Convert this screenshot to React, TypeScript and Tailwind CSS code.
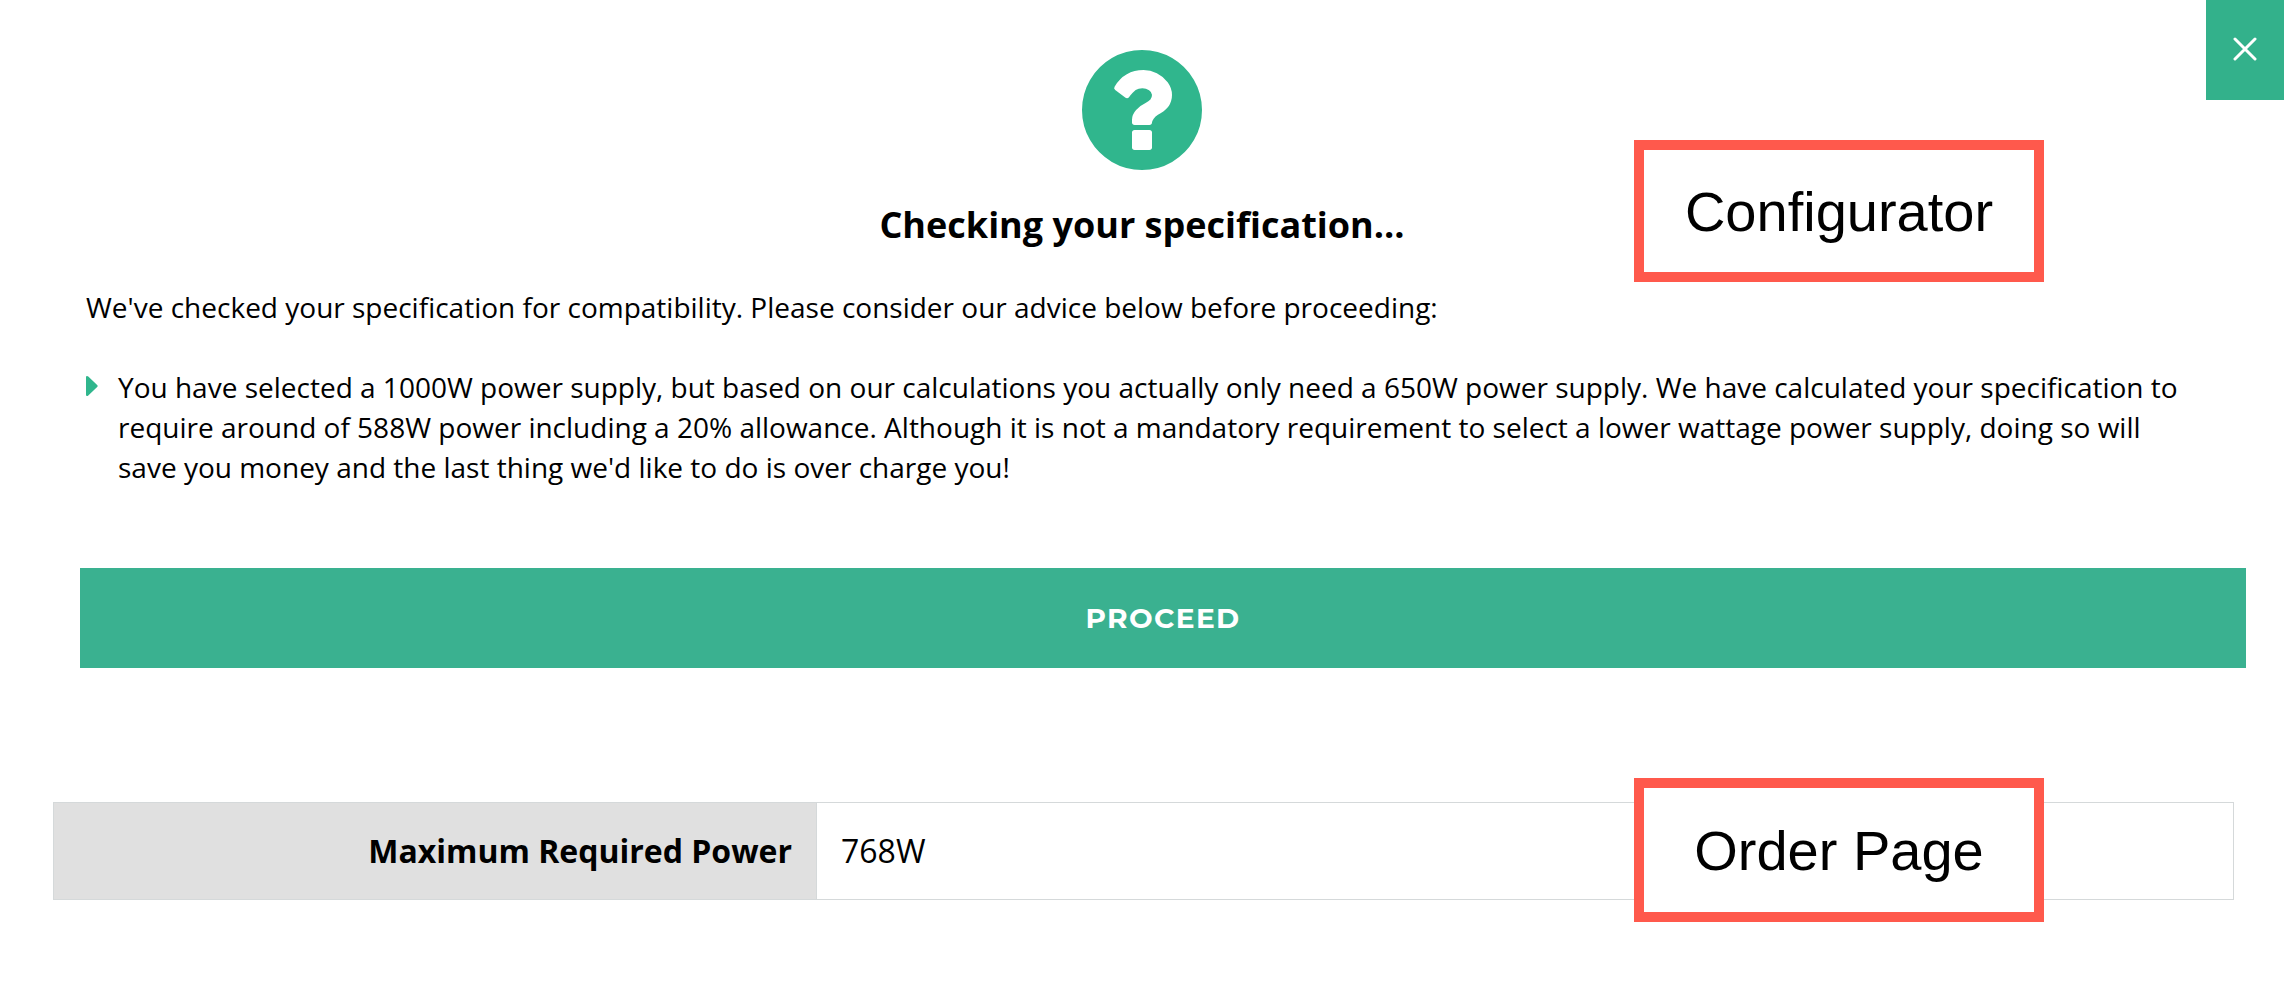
import React from "react";

function QuestionIcon() {
  return (
    <svg viewBox="128 128 1536 1536" className="size-[120px] text-[#30b68d]" fill="currentColor" aria-hidden="true">
      <path d="M1024 1376v-192q0-14-9-23t-23-9h-192q-14 0-23 9t-9 23v192q0 14 9 23t23 9h192q14 0 23-9t9-23zm256-672q0-88-55.5-163t-138.5-116-170-41q-243 0-371 213-15 24 8 42l132 100q7 6 19 6 16 0 25-12 53-68 86-92 34-24 86-24 48 0 85.5 26t37.5 59q0 38-20 61t-68 45q-63 28-115.5 86.5t-52.5 125.5v36q0 14 9 23t23 9h192q14 0 23-9t9-23q0-19 21.5-49.5t54.5-49.5q32-18 49-28.5t46-35 44.5-48 28-60.5 12.5-81zm384 192q0 209-103 385.5t-279.5 279.5-385.5 103-385.5-103-279.5-279.5-103-385.5 103-385.5 279.5-279.5 385.5-103 385.5 103 279.5 279.5 103 385.5z" />
    </svg>
  );
}

function CloseIcon() {
  return (
    <svg viewBox="0 0 24 24" className="size-6" fill="none" stroke="currentColor" strokeWidth="3" strokeLinecap="round" aria-hidden="true">
      <path d="M2 2L22 22M22 2L2 22" />
    </svg>
  );
}

function CaretIcon() {
  return (
    <svg viewBox="0 0 12 22" className="mt-2 h-[22px] w-3 shrink-0 text-[#30b68d]" fill="currentColor" aria-hidden="true">
      <path d="M0 2Q0 1 1 1Q1.7 1 2.3 1.6L11.4 10.2Q12 11 11.4 11.8L2.3 20.4Q1.7 21 1 21Q0 21 0 20Z" />
    </svg>
  );
}

function Callout({ children, className }: { children: React.ReactNode; className: string }) {
  return (
    <div
      className={`absolute right-[240px] flex w-[410px] items-center justify-center border-10 border-[#ff594c] bg-white pt-0.5 font-['Liberation_Sans',Arial,sans-serif] text-[56px] leading-none ${className}`}
    >
      {children}
    </div>
  );
}

export default function App() {
  return (
    <main className="relative min-h-screen bg-white font-['Open_Sans',sans-serif] text-black">
      <section aria-labelledby="check-title">
        <button
          type="button"
          aria-label="Close"
          className="absolute top-0 right-0 flex h-[100px] w-[78px] items-center justify-center bg-[#33b18b] pb-0.5 text-white"
        >
          <CloseIcon />
        </button>
        <Callout className="top-[140px] h-[142px]">Configurator</Callout>

        <header className="flex flex-col items-center pt-[50px]">
          <QuestionIcon />
          <h1 id="check-title" className="mt-[30px] text-[36px] leading-[50px] font-bold">
            Checking your specification...
          </h1>
        </header>

        <div className="mt-[37px] mr-[94px] ml-[86px] text-[28px] leading-10">
          <p>We've checked your specification for compatibility. Please consider our advice below before proceeding:</p>
          <ul className="mt-10">
            <li className="flex gap-5">
              <CaretIcon />
              <span>
                You have selected a 1000W power supply, but based on our calculations you actually only need a 650W
                power supply. We have calculated your specification to require around of 588W power including a 20%
                allowance. Although it is not a mandatory requirement to select a lower wattage power supply, doing so
                will save you money and the last thing we'd like to do is over charge you!
              </span>
            </li>
          </ul>
        </div>

        <div className="mt-[81px] mr-[38px] ml-20">
          <button
            type="button"
            className="h-[100px] w-full bg-[#3ab190] font-['Montserrat','Lato',sans-serif] text-[28px] font-bold tracking-wider text-white"
          >
            PROCEED
          </button>
        </div>
      </section>

      <section className="relative mt-[134px] pr-[50px] pl-[53px]">
        <table className="w-full table-fixed border-collapse border border-[#d5d9da] text-[32px] leading-10">
          <tbody>
            <tr className="h-[97px]">
              <th scope="row" className="w-[35%] bg-[#e0e0e0] px-6 text-right font-bold">
                Maximum Required Power
              </th>
              <td className="border-l border-[#d5d9da] px-6">768W</td>
            </tr>
          </tbody>
        </table>
        <Callout className="-top-6 h-[144px]">Order Page</Callout>
      </section>
    </main>
  );
}
